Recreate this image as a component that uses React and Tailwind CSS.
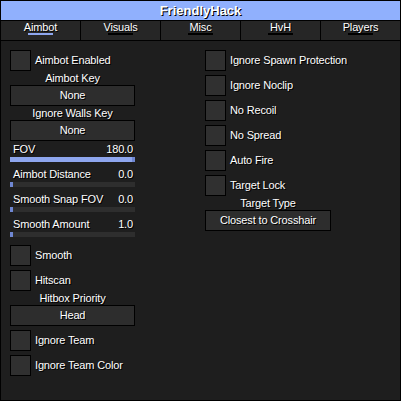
import React from "react";

const font = "font-['Liberation_Sans',Arial,sans-serif]";
const shadow = "[text-shadow:1px_1px_0_#000]";

function Checkbox({ label, className = "" }) {
  return (
    <div className={`flex items-center gap-[4px] h-[21px] ${className}`}>
      <div className="w-[21px] h-[21px] border border-black bg-[#303030] shrink-0" />
      <span className="leading-[13px] whitespace-nowrap">{label}</span>
    </div>
  );
}

function Label({ children }) {
  return <div className="h-[14px] leading-[14px] text-center whitespace-nowrap">{children}</div>;
}

function Button({ children, className = "" }) {
  return (
    <div className={`h-[21px] border border-black bg-[#2d2d2d] flex items-center justify-center leading-[13px] whitespace-nowrap ${className}`}>
      {children}
    </div>
  );
}

function Slider({ label, value, pct, className = "" }) {
  return (
    <div className={className}>
      <div className="flex justify-between h-[16px] leading-[16px] pl-[3px] pr-[2px] whitespace-nowrap">
        <span>{label}</span>
        <span>{value}</span>
      </div>
      <div className="h-[5px] bg-[#2e2e2e] flex">
        <div className="h-full bg-[#8ea6ee]" style={{ width: `calc(${pct}% - ${pct > 0 ? 3 : 0}px)` }} />
        <div className="h-full w-[3px] bg-[#6f87d2]" />
      </div>
    </div>
  );
}

const tabs = ["Aimbot", "Visuals", "Misc", "HvH", "Players"];

export default function App() {
  return (
    <div className={`w-[401px] h-[401px] border border-black bg-[#1e1e1e] box-border flex flex-col text-white text-[11px] tracking-[-0.15px] ${font} ${shadow}`}>
      <div className="h-[19px] bg-[#90b0fd] flex items-center justify-center text-[13px] font-bold tracking-normal">
        FriendlyHack
      </div>
      <div className="h-[1px] bg-black" />
      <div className="h-[19px] bg-[#262626] flex">
        {tabs.map((t, i) => (
          <div
            key={t}
            className={`flex flex-col items-center ${i < 4 ? "w-[80px] border-r border-black" : "flex-1"}`}
          >
            <span className="leading-[12px] whitespace-nowrap">{t}</span>
            <div className={`w-[25px] h-[2px] ${i === 0 ? "bg-[#8ea6ee]" : "bg-black"}`} />
          </div>
        ))}
      </div>
      <div className="h-[1px] bg-black" />
      <div className="flex-1 flex pt-[9px] pl-[9px]">
        <div className="w-[125px] flex flex-col">
          <Checkbox label="Aimbot Enabled" />
          <Label>Aimbot Key</Label>
          <Button>None</Button>
          <Label>Ignore Walls Key</Label>
          <Button>None</Button>
          <Slider label="FOV" value="180.0" pct={100} />
          <Slider label="Aimbot Distance" value="0.0" pct={0} className="mt-[4px]" />
          <Slider label="Smooth Snap FOV" value="0.0" pct={0} className="mt-[4px]" />
          <Slider label="Smooth Amount" value="1.0" pct={0} className="mt-[4px]" />
          <Checkbox label="Smooth" className="mt-[8px]" />
          <Checkbox label="Hitscan" className="mt-[4px]" />
          <Label>Hitbox Priority</Label>
          <Button>Head</Button>
          <Checkbox label="Ignore Team" className="mt-[4px]" />
          <Checkbox label="Ignore Team Color" className="mt-[4px]" />
        </div>
        <div className="ml-[70px] w-[126px] flex flex-col gap-[4px]">
          <Checkbox label="Ignore Spawn Protection" />
          <Checkbox label="Ignore Noclip" />
          <Checkbox label="No Recoil" />
          <Checkbox label="No Spread" />
          <Checkbox label="Auto Fire" />
          <Checkbox label="Target Lock" />
          <div className="-mt-[4px]">
            <Label>Target Type</Label>
            <Button>Closest to Crosshair</Button>
          </div>
        </div>
      </div>
    </div>
  );
}
